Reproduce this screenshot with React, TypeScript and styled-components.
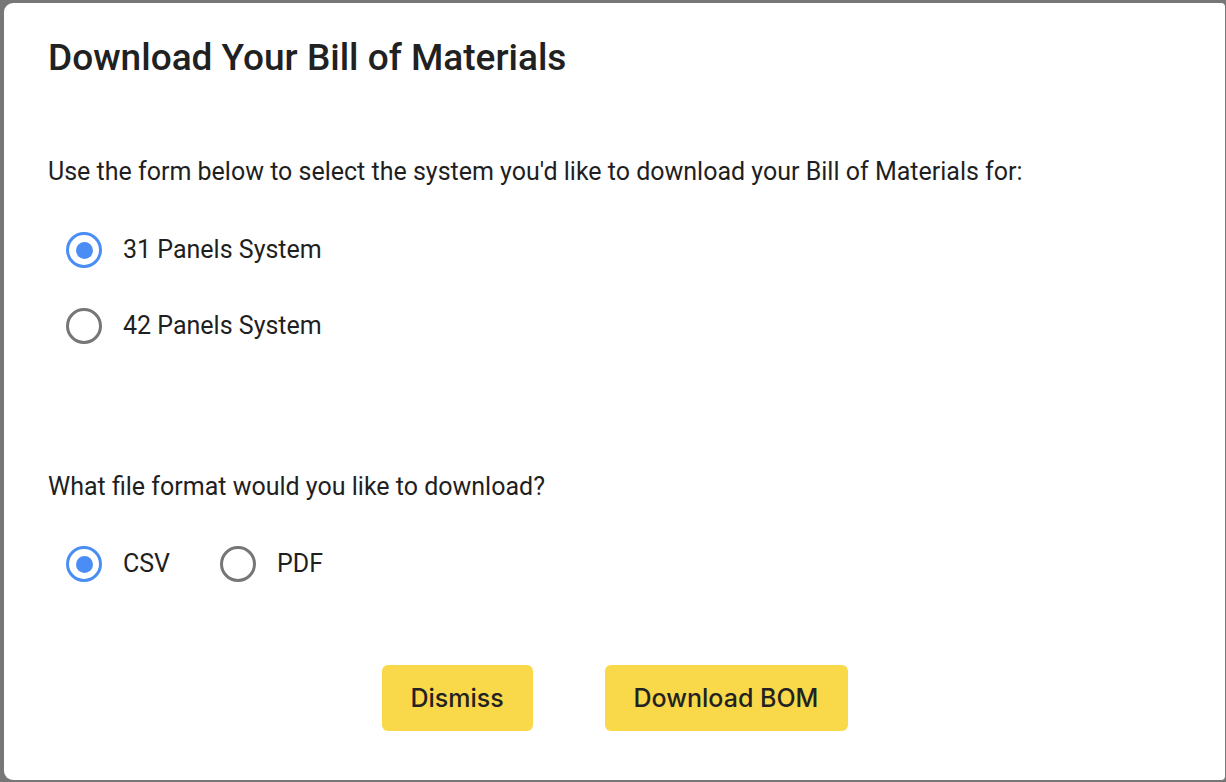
import React, { useState } from "react";
import styled, { createGlobalStyle } from "styled-components";

const Global = createGlobalStyle`
  html, body { margin: 0; padding: 0; }
  body {
    background: #777777;
    font-family: Roboto, "Liberation Sans", Arial, sans-serif;
    color: #1f1f1f;
  }
`;

const Backdrop = styled.div`
  box-sizing: border-box;
  width: 1226px;
  height: 782px;
  padding: 3px 1px 2px 4px;
  display: flex;
`;

const Modal = styled.div`
  flex: 1;
  background: #ffffff;
  border-radius: 9px 4px 4px 9px;
  padding: 0 44px;
  display: flex;
  flex-direction: column;
`;

const Title = styled.h1`
  margin: 33px 0 0;
  font-family: Roboto, "Liberation Sans", sans-serif;
  font-weight: 500;
  font-size: 37px;
  line-height: 44px;
  color: #212121;
`;

const Prompt = styled.p<{ $top: number }>`
  margin: ${(p) => p.$top}px 0 0;
  font-size: 25px;
  line-height: 30px;
  color: #1f1f1f;
`;

const RadioGroup = styled.div<{ $row?: boolean; $top: number }>`
  display: flex;
  flex-direction: ${(p) => (p.$row ? "row" : "column")};
  gap: ${(p) => (p.$row ? "50px" : "40px")};
  margin-top: ${(p) => p.$top}px;
  padding-left: 18px;
`;

const Option = styled.label`
  display: flex;
  align-items: center;
  gap: 21px;
  cursor: pointer;
  font-size: 25px;
  line-height: 36px;
  color: #1f1f1f;
`;

const Circle = styled.span<{ $checked: boolean }>`
  box-sizing: border-box;
  width: 36px;
  height: 36px;
  border-radius: 50%;
  border: 3px solid ${(p) => (p.$checked ? "#4a8ef5" : "#767676")};
  display: flex;
  align-items: center;
  justify-content: center;
  &::after {
    content: "";
    width: 17px;
    height: 17px;
    border-radius: 50%;
    background: #4a8ef5;
    display: ${(p) => (p.$checked ? "block" : "none")};
  }
`;

const Actions = styled.div`
  display: flex;
  justify-content: center;
  gap: 72px;
  margin-top: 83px;
`;

const Button = styled.button<{ $w: number }>`
  width: ${(p) => p.$w}px;
  height: 66px;
  border: none;
  border-radius: 6px;
  background: #f9d84a;
  font-family: Inter, Roboto, sans-serif;
  font-weight: 500;
  font-size: 25px;
  color: #222222;
  cursor: pointer;
`;

function Radio({
  label,
  checked,
  onSelect,
}: {
  label: string;
  checked: boolean;
  onSelect: () => void;
}) {
  return (
    <Option onClick={onSelect}>
      <Circle $checked={checked} />
      {label}
    </Option>
  );
}

export default function App() {
  const [system, setSystem] = useState("31");
  const [format, setFormat] = useState("CSV");
  return (
    <>
      <Global />
      <Backdrop>
        <Modal>
          <Title>Download Your Bill of Materials</Title>
          <Prompt $top={77}>
            Use the form below to select the system you'd like to download your Bill of Materials for:
          </Prompt>
          <RadioGroup $top={45}>
            <Radio label="31 Panels System" checked={system === "31"} onSelect={() => setSystem("31")} />
            <Radio label="42 Panels System" checked={system === "42"} onSelect={() => setSystem("42")} />
          </RadioGroup>
          <Prompt $top={128}>What file format would you like to download?</Prompt>
          <RadioGroup $row $top={44}>
            <Radio label="CSV" checked={format === "CSV"} onSelect={() => setFormat("CSV")} />
            <Radio label="PDF" checked={format === "PDF"} onSelect={() => setFormat("PDF")} />
          </RadioGroup>
          <Actions>
            <Button $w={151}>Dismiss</Button>
            <Button $w={243}>Download BOM</Button>
          </Actions>
        </Modal>
      </Backdrop>
    </>
  );
}
